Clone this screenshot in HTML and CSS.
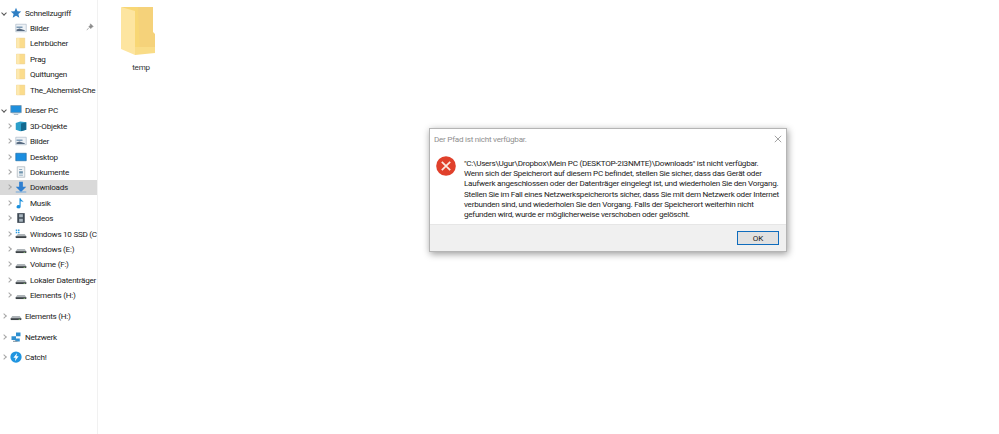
FILE: index.html
```html
<!DOCTYPE html>
<html lang="de">
<head>
<meta charset="utf-8">
<title>Der Pfad ist nicht verfügbar.</title>
<link rel="stylesheet" href="styles.css">
</head>
<body>
<svg class="defs" width="0" height="0">
	<defs>
		<symbol id="folder" viewBox="0 0 12 16">
			<path d="M0 1.500h11v13H0z" fill="#fbdc8c" stroke="#e8c877" stroke-width=".6"/>
			<path d="M0 1.500h4v13H0z" fill="#fde9b0"/>
		</symbol>
		<symbol id="drive" viewBox="0 0 16 16">
			<path d="M3 8h10l2 3v2H1v-2z" fill="#aeb4b8"/>
			<path d="M1 11h14v2.400H1z" fill="#3d4347"/>
			<path d="M11.500 12h2v.8h-2z" fill="#9be27f"/>
		</symbol>
		<symbol id="pictures" viewBox="0 0 16 16">
			<path d="M1 3h14v10H1z" fill="#eef2f6" stroke="#a3b3c3" stroke-width=".8"/>
			<path d="M2 6h8v2H2z" fill="#7d9ab5"/>
			<path d="M2 10l4-1.500 7 2.500v1H2z" fill="#56697f"/>
		</symbol>
	</defs>
</svg>
<div class="explorer">
	<nav class="sidebar">
		<div class="group">
			<div class="row"><span class="arrow open"></span>
				<svg class="icon" viewBox="0 0 16 16"><path d="M8 1l2 4.600 5 .4-3.800 3.300 1.200 5L8 11.600 3.600 14.300l1.200-5L1 6l5-.4z" fill="#2f7fc4"/></svg>
				<span>Schnellzugriff</span></div>
			<div class="row sub"><span class="arrow none"></span><svg class="icon"><use href="#pictures"/></svg><span>Bilder</span>
				<svg class="pin" viewBox="0 0 10 10"><path d="M5.500 1l3.500 3.500-1.500.5-1.500 2-2.500-2.500 2-1.500zM3.500 6L1 9" fill="#8a8a8a" stroke="#8a8a8a" stroke-width=".8"/></svg></div>
			<div class="row sub"><span class="arrow none"></span><svg class="icon"><use href="#folder"/></svg><span>Lehrbücher</span></div>
			<div class="row sub"><span class="arrow none"></span><svg class="icon"><use href="#folder"/></svg><span>Prag</span></div>
			<div class="row sub"><span class="arrow none"></span><svg class="icon"><use href="#folder"/></svg><span>Quittungen</span></div>
			<div class="row sub"><span class="arrow none"></span><svg class="icon"><use href="#folder"/></svg><span>The_Alchemist-Che</span></div>
		</div>
		<div class="group">
			<div class="row"><span class="arrow open"></span>
				<svg class="icon" viewBox="0 0 16 16"><path d="M1 2h14v9.500H1z" fill="#1f8fdc" stroke="#6c8aa0" stroke-width=".8"/><path d="M5 13h6v1.500H5z" fill="#9fb4c4"/><path d="M3 12h10v1H3z" fill="#c9d7e1"/></svg>
				<span>Dieser PC</span></div>
			<div class="row sub"><span class="arrow"></span>
				<svg class="icon" viewBox="0 0 16 16"><path d="M1 4l6-2 8 1v10l-8 2-6-2z" fill="#2c9fca"/><path d="M8 4.500l7-1.500v10l-7 2z" fill="#12698f"/></svg>
				<span>3D-Objekte</span></div>
			<div class="row sub"><span class="arrow"></span><svg class="icon"><use href="#pictures"/></svg><span>Bilder</span></div>
			<div class="row sub"><span class="arrow"></span>
				<svg class="icon" viewBox="0 0 16 16"><path d="M1 3h14v10H1z" fill="#1b8ee0" stroke="#17679f" stroke-width=".8"/></svg>
				<span>Desktop</span></div>
			<div class="row sub"><span class="arrow"></span>
				<svg class="icon" viewBox="0 0 16 16"><path d="M3 1h10v14H3z" fill="#f1f4f6" stroke="#9aa6ae" stroke-width=".8"/><path d="M5.500 4h4v1h-4zM5.500 7h5v3h-5zM5.500 11.500h5v1h-5z" fill="#6f93ad"/></svg>
				<span>Dokumente</span></div>
			<div class="row sub selected"><span class="arrow"></span>
				<svg class="icon" viewBox="0 0 16 16"><path d="M5.500 1h5v6.500H15L8 14.500 1 7.500h4.500z" fill="#2f7fd0"/><path d="M1 14h14v1.300H1z" fill="#6aa5dc"/></svg>
				<span>Downloads</span></div>
			<div class="row sub"><span class="arrow"></span>
				<svg class="icon" viewBox="0 0 16 16"><path d="M6 1.500h1.500c.3 2.500 3.500 3 4 5.500-1-1-2.500-1.500-4-1.500V13a2.700 2.200 0 1 1-1.500-2z" fill="#1a8fdc"/></svg>
				<span>Musik</span></div>
			<div class="row sub"><span class="arrow"></span>
				<svg class="icon" viewBox="0 0 16 16"><path d="M3 1.500h10v13H3z" fill="#3f4a55"/><path d="M5.500 3h5v4h-5zM5.500 9h5v4h-5z" fill="#a9b6c0"/></svg>
				<span>Videos</span></div>
			<div class="row sub"><span class="arrow"></span>
				<svg class="icon" viewBox="0 0 16 16"><path d="M1 2h2v2H1zM4 2h2v2H4zM1 5h2v2H1zM4 5h2v2H4z" fill="#2b9be0"/><path d="M4 8h9l2 3v2H1v-2z" fill="#aeb4b8"/><path d="M1 11h14v2.400H1z" fill="#3d4347"/></svg>
				<span>Windows 10 SSD (C</span></div>
			<div class="row sub"><span class="arrow"></span><svg class="icon"><use href="#drive"/></svg><span>Windows (E:)</span></div>
			<div class="row sub"><span class="arrow"></span><svg class="icon"><use href="#drive"/></svg><span>Volume (F:)</span></div>
			<div class="row sub"><span class="arrow"></span><svg class="icon"><use href="#drive"/></svg><span>Lokaler Datenträger</span></div>
			<div class="row sub"><span class="arrow"></span><svg class="icon"><use href="#drive"/></svg><span>Elements (H:)</span></div>
		</div>
		<div class="group">
			<div class="row"><span class="arrow"></span><svg class="icon"><use href="#drive"/></svg><span>Elements (H:)</span></div>
		</div>
		<div class="group">
			<div class="row"><span class="arrow"></span>
				<svg class="icon" viewBox="0 0 16 16"><path d="M8 2h6v5H8zM2 7h6v5H2zM7 10h6v4H7z" fill="#2f8fd0"/><path d="M4 13h6v1.500H4z" fill="#8a9aa6"/></svg>
				<span>Netzwerk</span></div>
		</div>
		<div class="group">
			<div class="row"><span class="arrow"></span>
				<svg class="icon" viewBox="0 0 16 16"><circle cx="8" cy="8" r="7.500" fill="#1f95e0"/><path d="M9.500 2.500L4.500 9h3l-1 4.500L11.500 7h-3z" fill="#fff"/></svg>
				<span>Catch!</span></div>
		</div>
	</nav>
	<main class="files">
		<div class="file">
			<svg class="bigfolder" viewBox="0 0 36 50">
				<path d="M2 1h31v40H2z" fill="#f8d775"/>
				<path d="M18 1h15v25l2 2v18l-15 1z" fill="#f5d27a"/>
				<path d="M1 1l14 4v44L1 43z" fill="#fde5a0"/>
				<path d="M15 5v44l20-2V41H15z" fill="#f9dc87"/>
			</svg>
			<span class="name">temp</span>
		</div>
	</main>
</div>
<div class="dialog">
	<div class="titlebar">
		<span>Der Pfad ist nicht verfügbar.</span>
		<svg class="close" viewBox="0 0 10 10"><path d="M1 1l8 8M9 1L1 9" stroke="#8c8c8c" stroke-width="1" fill="none"/></svg>
	</div>
	<div class="body">
		<svg class="error" viewBox="0 0 20 20"><circle cx="10" cy="10" r="9.800" fill="#e0402b"/><path d="M5.800 5.800l8.400 8.400M14.200 5.800l-8.400 8.400" stroke="#fbe8df" stroke-width="1.700"/></svg>
		<p class="message">"C:\Users\Ugur\Dropbox\Mein PC (DESKTOP-2I3NMTE)\Downloads" ist nicht verfügbar.<br>Wenn sich der Speicherort auf diesem PC befindet, stellen Sie sicher, dass das Gerät oder<br>Laufwerk angeschlossen oder der Datenträger eingelegt ist, und wiederholen Sie den Vorgang.<br>Stellen Sie im Fall eines Netzwerkspeicherorts sicher, dass Sie mit dem Netzwerk oder Internet<br>verbunden sind, und wiederholen Sie den Vorgang. Falls der Speicherort weiterhin nicht<br>gefunden wird, wurde er möglicherweise verschoben oder gelöscht.</p>
	</div>
	<div class="footer"><button class="ok">OK</button></div>
</div>
</body>
</html>
```

FILE: styles.css
```css
html, body {
	margin: 0;
	padding: 0;
	height: 100%;
	background: #fff;
	overflow: hidden;
}
body {
	font-family: Roboto, "Liberation Sans", sans-serif;
	font-size: 8.1px;
	letter-spacing: -0.25px;
	color: #222;
}
.defs {
	display: block;
	height: 0;
}
.explorer {
	display: flex;
	height: 434px;
}
.sidebar {
	width: 97px;
	flex: none;
	padding-top: 5px;
	border-right: 1px solid #f1f1f1;
	overflow: hidden;
}
.group {
	margin-bottom: 5.400px;
}
.row {
	display: flex;
	align-items: center;
	height: 15.400px;
	white-space: nowrap;
	position: relative;
	gap: 2px;
	padding-left: 2px;
}
.row.sub {
	padding-left: 7px;
}
.row.selected {
	background: #d9d9d9;
}
.arrow {
	width: 4px;
	height: 4px;
	flex: none;
	box-sizing: border-box;
	border-top: 1px solid #a6a6a6;
	border-right: 1px solid #a6a6a6;
	transform: rotate(45deg);
	margin-right: 2px;
}
.arrow.open {
	border-color: #555;
	transform: rotate(135deg);
}
.arrow.none {
	visibility: hidden;
}
.icon {
	width: 12px;
	height: 12px;
	flex: none;
	margin-right: 1px;
}
.pin {
	position: absolute;
	left: 86px;
	top: 3px;
	width: 8px;
	height: 8px;
}
.files {
	flex: 1;
	padding: 6px 0 0 21px;
}
.file {
	width: 44px;
	display: flex;
	flex-direction: column;
	align-items: center;
}
.bigfolder {
	width: 36px;
	height: 50px;
	margin-right: 6px;
}
.name {
	margin-top: 6px;
	color: #333;
}
.dialog {
	position: absolute;
	left: 429px;
	top: 128px;
	width: 358px;
	height: 124px;
	box-sizing: border-box;
	display: flex;
	flex-direction: column;
	background: #fff;
	border: 1px solid #b5b5b5;
	box-shadow: 1px 2px 7px rgba(0, 0, 0, 0.4);
}
.titlebar {
	display: flex;
	justify-content: space-between;
	align-items: center;
	height: 20px;
	padding: 0 4px 0 4px;
	color: #8f8f8f;
}
.close {
	width: 8px;
	height: 8px;
}
.body {
	flex: 1;
	display: flex;
	padding: 7px 0 0 6px;
}
.error {
	width: 20px;
	height: 20px;
	flex: none;
	margin-right: 8px;
}
.message {
	margin: 0;
	padding-top: 2px;
	line-height: 10.200px;
	white-space: nowrap;
}
.footer {
	height: 26px;
	flex: none;
	display: flex;
	align-items: center;
	justify-content: flex-end;
	padding-right: 7px;
	background: #f0f0f0;
	border-top: 1px solid #e6e6e6;
}
.ok {
	width: 42px;
	height: 14px;
	padding: 0;
	font: inherit;
	color: #1a1a1a;
	background: #e1e1e1;
	border: 1.500px solid #0f6cbd;
	border-radius: 0;
}
```
